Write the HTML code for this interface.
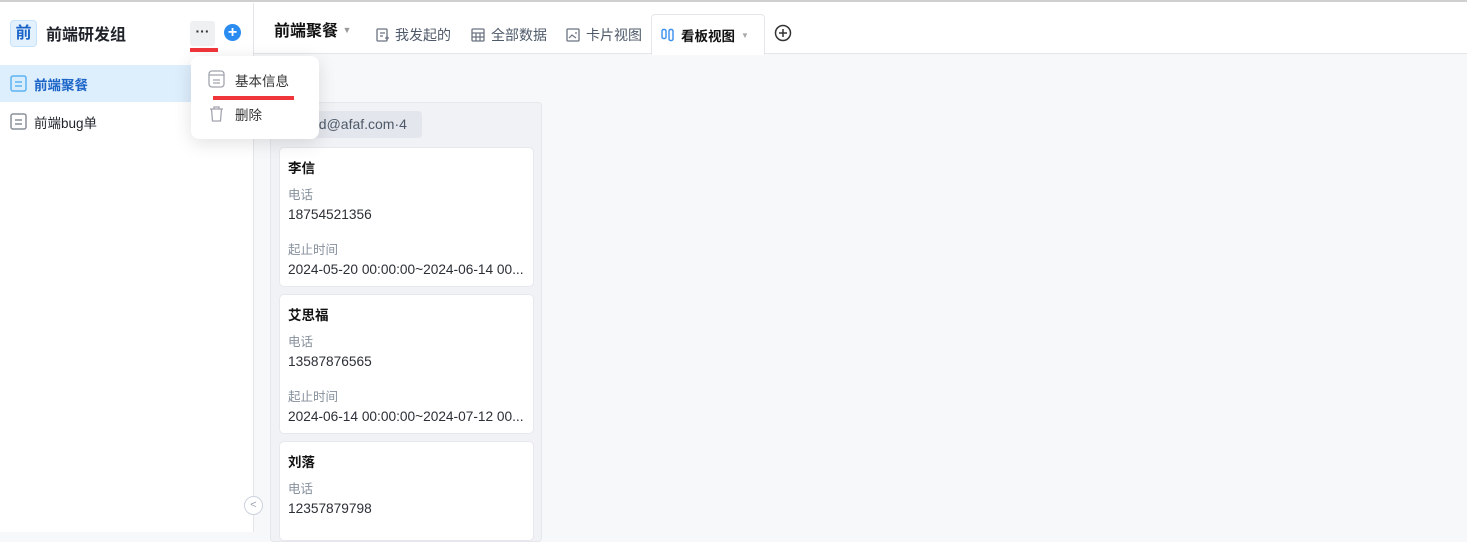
<!DOCTYPE html>
<html><head><meta charset="utf-8"><style>
*{box-sizing:border-box;margin:0;padding:0}
body{width:1467px;height:532px;overflow:hidden;background:#f7f8fa;font-family:"Liberation Sans","Noto Sans CJK SC",sans-serif;position:relative;color:#1f2329}
.abs{position:absolute}
.topline{left:0;top:0;width:1467px;height:3px;background:#fff;border-top:2px solid #cfcfcf}
.side{left:0;top:3px;width:254px;height:529px;background:#fff;border-right:1px solid #e4e6ea}
.header{left:254px;top:3px;width:1213px;height:51px;background:#fff;border-bottom:1px solid #e4e6ea}
.tab{top:25px;font-size:14px;color:#4e5969;display:flex;align-items:center;gap:6px}
.card{left:279px;width:255px;background:#fff;border:1px solid #e6e8ee;border-radius:5px;padding:8px 8px}
.card .n{font-size:13.5px;font-weight:bold;color:#111;margin-top:1px}
.card .l{font-size:12.5px;color:#86909c;margin-top:7px}
.card .v{font-size:13.7px;color:#2b2f36;margin-top:4px;white-space:nowrap}
</style></head><body>
<div class="abs topline"></div>
<div class="abs side">
  <div class="abs" style="left:10px;top:17px;width:27px;height:27px;background:#e3f1fd;border:1px solid #c6e2fa;border-radius:4px;color:#1a64c8;font-size:16px;font-weight:bold;text-align:center;line-height:25px">前</div>
  <div class="abs" style="left:46px;top:18px;font-size:16px;font-weight:bold;color:#1f2329">前端研发组</div>
  <div class="abs" style="left:190px;top:18px;width:25px;height:25px;background:#eff0f2;border-radius:3px;text-align:center;font-size:14px;line-height:20px;font-weight:bold;color:#333">···</div>
  <div class="abs" style="left:190px;top:45px;width:28px;height:4px;background:#f0353a"></div>
  <div class="abs" style="left:224px;top:21px;width:17px;height:17px;border-radius:50%;background:#2a8cf0;color:#fff;text-align:center;line-height:17px;font-size:16px;font-weight:bold">+</div>
  <div class="abs" style="left:0;top:62px;width:253px;height:37px;background:#ddeefc"></div>
  <svg class="abs" style="left:10px;top:72px" width="17" height="17"><rect x="1" y="1" width="15" height="15" rx="2" fill="#d9ecfc" stroke="#5cb3f2" stroke-width="1.5"/><path d="M5 7h7M5 11h7" stroke="#5cb3f2" stroke-width="1.5"/></svg>
  <div class="abs" style="left:34px;top:71px;font-size:13.5px;font-weight:bold;color:#1a64c8">前端聚餐</div>
  <svg class="abs" style="left:10px;top:110px" width="17" height="17"><rect x="1" y="1" width="15" height="15" rx="2" fill="none" stroke="#8a8f99" stroke-width="1.5"/><path d="M5 7h7M5 11h7" stroke="#8a8f99" stroke-width="1.5"/></svg>
  <div class="abs" style="left:34px;top:109px;font-size:13.5px;color:#1f2329">前端bug单</div>
  <div class="abs" style="left:244px;top:493px;width:19px;height:19px;border-radius:50%;border:1px solid #ccd2dc;background:#fff;color:#9aa3b0;font-size:11px;text-align:center;line-height:17px">&lt;</div>
</div>
<div class="abs header">
  <div class="abs" style="left:20px;top:14px;font-size:16px;font-weight:bold;color:#111">前端聚餐 <span style="font-size:9px;color:#999;vertical-align:3px">▼</span></div>
  <div class="abs" style="left:397px;top:11px;width:114px;height:41px;background:#fff;border:1px solid #e4e6ea;border-bottom:none;border-radius:4px 4px 0 0"></div>
</div>
<div class="abs tab" style="left:376px"><svg width="13" height="14"><rect x="1" y="1" width="10" height="12" rx="1" fill="none" stroke="#6b7280" stroke-width="1.3"/><path d="M4 5h5M4 8h3M9 10h4M11 8v4" stroke="#6b7280" stroke-width="1.3"/></svg>我发起的</div>
<div class="abs tab" style="left:471px"><svg width="14" height="14"><rect x="1" y="1" width="12" height="12" rx="1" fill="none" stroke="#6b7280" stroke-width="1.3"/><path d="M1 5h12M1 9h12M5 5v8M9 5v8" stroke="#6b7280" stroke-width="1.2"/></svg>全部数据</div>
<div class="abs tab" style="left:566px"><svg width="14" height="14"><rect x="1" y="1" width="12" height="12" rx="1" fill="none" stroke="#6b7280" stroke-width="1.3"/><path d="M3 10l3-3 4 3M9 5h2" stroke="#6b7280" stroke-width="1.2" fill="none"/></svg>卡片视图</div>
<div class="abs tab" style="left:661px;color:#111;font-weight:bold;font-size:13.5px"><svg width="14" height="14"><rect x="1" y="1.5" width="4" height="9" rx="1.5" fill="none" stroke="#3a8ef0" stroke-width="1.4"/><rect x="8" y="1.5" width="4" height="11" rx="1.5" fill="none" stroke="#3a8ef0" stroke-width="1.4"/></svg>看板视图 <span style="font-size:8px;color:#aaa;font-weight:normal">▼</span></div>
<svg class="abs" style="left:774px;top:24px" width="18" height="18"><circle cx="9" cy="9" r="7.5" fill="none" stroke="#333" stroke-width="1.5"/><path d="M9 5v8M5 9h8" stroke="#333" stroke-width="1.5"/></svg>

<div class="abs" style="left:270px;top:102px;width:272px;height:440px;background:#f0f2f5;border:1px solid #e4e7ec;border-radius:4px"></div>
<div class="abs" style="left:283px;top:111px;width:139px;height:27px;background:#e3e6ec;border-radius:4px;font-size:14px;color:#4e5969;line-height:27px;padding-left:28px">ad@afaf.com·4</div>
<div class="abs card" style="top:147px;height:140px"><div class="n">李信</div><div class="l">电话</div><div class="v">18754521356</div><div class="l" style="margin-top:17px">起止时间</div><div class="v">2024-05-20 00:00:00~2024-06-14 00...</div></div>
<div class="abs card" style="top:294px;height:140px"><div class="n">艾思福</div><div class="l">电话</div><div class="v">13587876565</div><div class="l" style="margin-top:17px">起止时间</div><div class="v">2024-06-14 00:00:00~2024-07-12 00...</div></div>
<div class="abs card" style="top:441px;height:100px"><div class="n">刘落</div><div class="l">电话</div><div class="v">12357879798</div></div>

<div class="abs" style="left:191px;top:56px;width:128px;height:83px;background:#fff;border-radius:8px;box-shadow:0 4px 18px rgba(0,0,0,.12)">
  <svg class="abs" style="left:17px;top:14px" width="17" height="18"><rect x="1" y="1" width="15" height="16" rx="3" fill="none" stroke="#a0a5ae" stroke-width="1.3"/><path d="M1 5h15M5 10h7M5 13h7" stroke="#a0a5ae" stroke-width="1.2"/></svg>
  <div class="abs" style="left:44px;top:14px;font-size:13.5px;color:#333">基本信息</div>
  <div class="abs" style="left:22px;top:40px;width:81px;height:4px;background:#f0353a"></div>
  <svg class="abs" style="left:17px;top:49px" width="17" height="18"><path d="M2 4h13M6 4V2h5v2M3.5 4l1 12h8l1-12" fill="none" stroke="#a0a5ae" stroke-width="1.3"/></svg>
  <div class="abs" style="left:44px;top:48px;font-size:13.5px;color:#333">删除</div>
</div>
</body></html>
